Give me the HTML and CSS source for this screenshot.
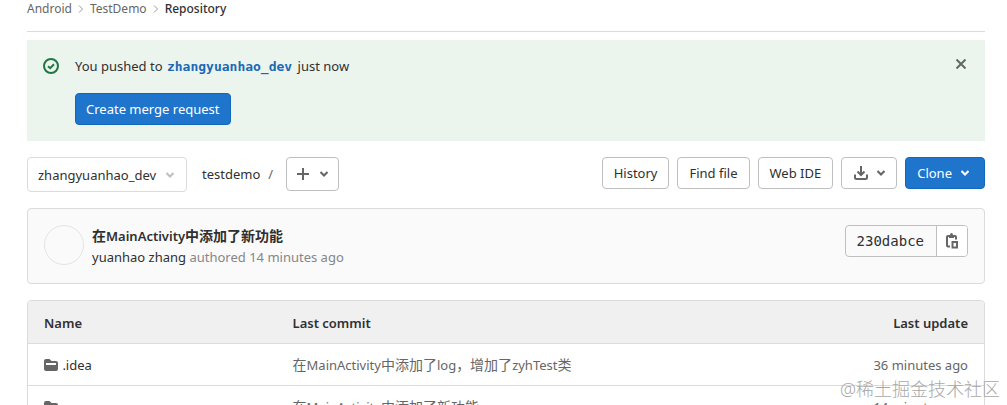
FILE: index.html
```html
<!DOCTYPE html>
<html lang="zh-CN">
<head>
  <meta charset="UTF-8" />
  <title>Repository · TestDemo</title>
  <link rel="stylesheet" href="styles.css">
</head>
<body>
  <nav class="breadcrumbs">
    <a href="#">Android</a>
    <svg class="sep" viewBox="0 0 8 8"><path d="M2 0.5L5.5 4L2 7.5" /></svg>
    <a href="#">TestDemo</a>
    <svg class="sep" viewBox="0 0 8 8"><path d="M2 0.5L5.5 4L2 7.5" /></svg>
    <a class="current" href="#">Repository</a>
  </nav>

  <div class="alert">
    <svg class="alert-icon" viewBox="0 0 16 16">
      <circle cx="8" cy="8" r="7" />
      <path d="M5 8.2L7.2 10.2L11 6.2" />
    </svg>
    <div class="alert-body">
      <p>You pushed to <a class="branch" href="#">zhangyuanhao_dev</a> just now</p>
      <button class="btn btn-confirm">Create merge request</button>
    </div>
    <button class="close" aria-label="Dismiss">
      <svg viewBox="0 0 10 10"><path d="M0.5 0.5L9.5 9.5M9.5 0.5L0.5 9.5" /></svg>
    </button>
  </div>

  <div class="tree-nav">
    <button class="ref-select">
      zhangyuanhao_dev
      <svg class="chevron" viewBox="0 0 8 8"><path d="M0.5 2L4 5.5L7.5 2" /></svg>
    </button>
    <a class="path" href="#">testdemo</a>
    <span class="slash">/</span>
    <button class="btn btn-add" aria-label="Add to tree">
      <svg class="plus" viewBox="0 0 12 12"><path d="M6 0V12M0 6H12" /></svg>
      <svg class="chevron" viewBox="0 0 8 8"><path d="M0.5 2L4 5.5L7.5 2" /></svg>
    </button>
    <div class="tree-controls">
      <button class="btn">History</button>
      <button class="btn">Find file</button>
      <button class="btn">Web IDE</button>
      <button class="btn btn-download" aria-label="Download">
        <svg class="download" viewBox="0 0 14 14"><path d="M7 0V8M3.5 5.5L7 9L10.5 5.5M1 8.5V11.5Q1 13 2.5 13H11.5Q13 13 13 11.5V8.5" /></svg>
        <svg class="chevron" viewBox="0 0 8 8"><path d="M0.5 2L4 5.5L7.5 2" /></svg>
      </button>
      <button class="btn btn-confirm btn-clone">
        Clone
        <svg class="chevron" viewBox="0 0 8 8"><path d="M0.5 2L4 5.5L7.5 2" /></svg>
      </button>
    </div>
  </div>

  <div class="commit">
    <span class="avatar"></span>
    <div class="commit-text">
      <a class="commit-title" href="#"><span class="zh">在</span>MainActivity<span class="zh">中添加了新功能</span></a>
      <div class="commit-meta"><a href="#">yuanhao zhang</a> authored <time>14 minutes ago</time></div>
    </div>
    <div class="sha-group">
      <span class="sha">230dabce</span>
      <button class="copy" aria-label="Copy commit SHA">
        <svg viewBox="0 0 14 16">
          <path d="M5 13.500H3Q2 13.500 2 12.500V4Q2 3 3 3H10Q11 3 11 4V6.500" />
          <path d="M7.500 9H12V14.500H7.500Z" />
          <path class="solid" d="M4 2H5Q5 0 6.500 0Q8 0 8 2H9V5H4Z" />
        </svg>
      </button>
    </div>
  </div>

  <div class="tree">
    <table>
      <thead>
        <tr><th class="name">Name</th><th>Last commit</th><th class="date">Last update</th></tr>
      </thead>
      <tbody>
        <tr>
          <td class="name">
            <svg class="folder" viewBox="0 0 14 12"><path d="M2 0H5.5L7.5 2H12Q14 2 14 4V10Q14 12 12 12H2Q0 12 0 10V2Q0 0 2 0ZM2 4V6H12V4Z" /></svg>
            <a href="#">.idea</a>
          </td>
          <td><span class="zh">在</span>MainActivity<span class="zh">中添加了</span>log<span class="zh">，增加了</span>zyhTest<span class="zh">类</span></td>
          <td class="date">36 minutes ago</td>
        </tr>
        <tr>
          <td class="name">
            <svg class="folder" viewBox="0 0 14 12"><path d="M2 0H5.5L7.5 2H12Q14 2 14 4V10Q14 12 12 12H2Q0 12 0 10V2Q0 0 2 0ZM2 4V6H12V4Z" /></svg>
          </td>
          <td><span class="zh">在</span>MainActivity<span class="zh">中添加了新功能</span></td>
          <td class="date">14 minutes ago</td>
        </tr>
      </tbody>
    </table>
  </div>

  <div class="watermark">@稀土掘金技术社区</div>
</body>
</html>
```
FILE: styles.css
```css
* {
  box-sizing: border-box;
}
body {
  margin: 0;
  padding: 0 22px 0 27px;
  height: 100vh;
  overflow: hidden;
  position: relative;
  background: #fff;
  color: #303030;
  font-family: "Noto Sans", "Noto Sans CJK SC", sans-serif;
  font-size: 13px;
  line-height: 20px;
}
a {
  color: inherit;
  text-decoration: none;
}
button {
  font: inherit;
  color: inherit;
  cursor: pointer;
}
svg {
  flex: none;
  fill: none;
  stroke: #666;
  stroke-width: 2;
}
.zh {
  font-size: 14px;
}

/* breadcrumbs */
.breadcrumbs {
  display: flex;
  align-items: center;
  height: 32px;
  padding-bottom: 14px;
  border-bottom: 1px solid #dbdbdb;
  font-size: 12px;
  color: #666;
}
.breadcrumbs .sep {
  width: 8px;
  height: 8px;
  margin: 0 5px;
  stroke: #999;
  stroke-width: 1;
}
.breadcrumbs .current {
  color: #303030;
  font-weight: 500;
}

/* push notice */
.alert {
  display: flex;
  align-items: flex-start;
  margin-top: 8px;
  padding: 16px;
  background: #ecf4ee;
}
.alert-icon {
  width: 16px;
  height: 16px;
  margin: 2px 16px 0 0;
  stroke: #217645;
}
.alert-body {
  flex: 1;
}
.alert p {
  margin: 0 0 17px;
}
.branch {
  padding: 0 2px 0 1px;
  color: #1b69b6;
  font: bold 13px "DejaVu Sans Mono", monospace;
}
.close {
  padding: 3px;
  border: 0;
  background: none;
}
.close svg {
  display: block;
  width: 10px;
  height: 10px;
}

.btn {
  display: flex;
  align-items: center;
  height: 32px;
  padding: 0 11px;
  border: 1px solid #bfbfbf;
  border-radius: 4px;
  background: #fff;
}
.btn-confirm {
  padding: 0 10px;
  border-color: #1068bf;
  background: #1f75cb;
  color: #fff;
}
.chevron {
  width: 8px;
  height: 8px;
}

/* branch picker and actions */
.tree-nav {
  display: flex;
  align-items: flex-start;
  height: 35px;
  margin-top: 16px;
  line-height: 34px;
}
.ref-select {
  display: flex;
  align-items: center;
  justify-content: space-between;
  width: 160px;
  height: 35px;
  padding: 0 12px 0 10px;
  border: 1px solid #dbdbdb;
  border-radius: 4px;
  background: #fff;
}
.ref-select .chevron {
  stroke: #bfbfbf;
}
.path {
  margin-left: 15px;
}
.slash {
  margin: 0 13px 0 8px;
  color: #666;
}
.btn-add {
  height: 34px;
  padding: 0 10px;
  gap: 11px;
}
.plus {
  width: 12px;
  height: 12px;
}
.tree-controls {
  display: flex;
  gap: 8px;
  margin-left: auto;
}
.btn-download {
  padding: 0 11px 0 12px;
  gap: 9px;
}
.download {
  width: 14px;
  height: 14px;
}
.btn-clone {
  gap: 9px;
  padding: 0 15px 0 11px;
}
.btn-clone .chevron {
  stroke: #fff;
}

/* latest commit */
.commit {
  display: flex;
  align-items: flex-start;
  height: 76px;
  margin-top: 16px;
  padding: 16px;
  border: 1px solid #dbdbdb;
  border-radius: 4px;
  background: #fafafa;
}
.avatar {
  width: 40px;
  height: 40px;
  margin-right: 8px;
  border: 1px solid #e4e4e4;
  border-radius: 50%;
}
.commit-text {
  flex: 1;
  line-height: 21px;
}
.commit-title {
  display: block;
  font-weight: 600;
}
.commit-meta {
  color: #868686;
}
.commit-meta a {
  color: #303030;
}
.sha-group {
  display: flex;
  height: 32px;
  border: 1px solid #bfbfbf;
  border-radius: 4px;
  overflow: hidden;
}
.sha {
  padding: 0 12px 0 11px;
  font: 14px/30px "DejaVu Sans Mono", monospace;
}
.copy {
  width: 31px;
  padding: 0 8px;
  border: 0;
  border-left: 1px solid #bfbfbf;
  background: #fff;
}
.copy svg {
  display: block;
  width: 14px;
  height: 16px;
}
.copy .solid {
  fill: #666;
  stroke: none;
}

/* file tree */
.tree {
  margin-top: 16px;
  border: 1px solid #dbdbdb;
  border-radius: 4px;
  overflow: hidden;
}
table {
  width: 100%;
  table-layout: fixed;
  border-collapse: collapse;
}
th,
td {
  height: 42px;
  padding: 2px 16px 0;
  border-bottom: 1px solid #dbdbdb;
  text-align: left;
  white-space: nowrap;
}
th {
  background: #f0f0f0;
  font-weight: 600;
}
td {
  color: #666;
}
.name {
  width: 26%;
}
td.name {
  color: #303030;
}
.date {
  width: 20%;
  text-align: right;
}
.folder {
  width: 14px;
  height: 12px;
  margin-right: 1px;
  vertical-align: -1px;
  fill: #666;
  fill-rule: evenodd;
  stroke: none;
}

.watermark {
  position: absolute;
  right: 7px;
  bottom: 4px;
  color: #a8a8a8;
  font-size: 18px;
  font-weight: 300;
  line-height: 24px;
}
```
